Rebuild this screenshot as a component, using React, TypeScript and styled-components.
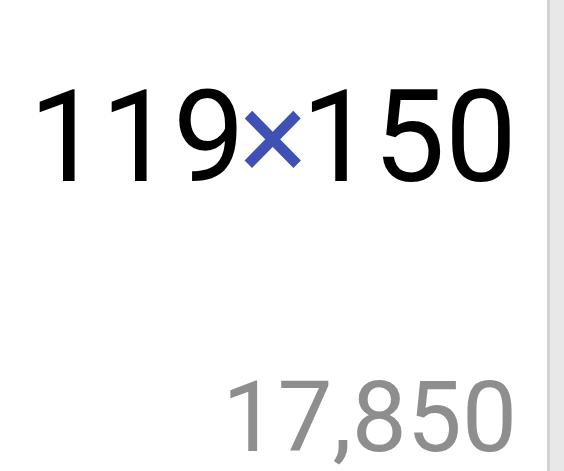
import { createGlobalStyle, styled } from "styled-components";

const Global = createGlobalStyle`
  html, body {
    margin: 0;
    padding: 0;
    background: #ffffff;
  }
  body {
    font-family: Roboto, "Liberation Sans", sans-serif;
  }
`;

const Screen = styled.div`
  display: flex;
  width: 564px;
  height: 471px;
  overflow: hidden;
`;

const Display = styled.main`
  flex: 1;
  display: flex;
  flex-direction: column;
  align-items: flex-end;
  padding: 73px 30px 0 0;
`;

const Expression = styled.div`
  font-size: 128px;
  line-height: 128px;
  color: #000;
  white-space: nowrap;
`;

const Operator = styled.span`
  color: #3f51b5;
  margin: 0 -6px;
`;

const Result = styled.div`
  margin-top: 168px;
  font-size: 98px;
  line-height: 98px;
  color: #8e8e8e;
  white-space: nowrap;
`;

const Edge = styled.div`
  width: 3px;
  background: #d2d2d2;
`;

const Panel = styled.aside`
  width: 14px;
  background: #e8e8e8;
`;

export default function App() {
  return (
    <>
      <Global />
      <Screen>
        <Display>
          <Expression>
            119<Operator>×</Operator>150
          </Expression>
          <Result>17,850</Result>
        </Display>
        <Edge />
        <Panel />
      </Screen>
    </>
  );
}
